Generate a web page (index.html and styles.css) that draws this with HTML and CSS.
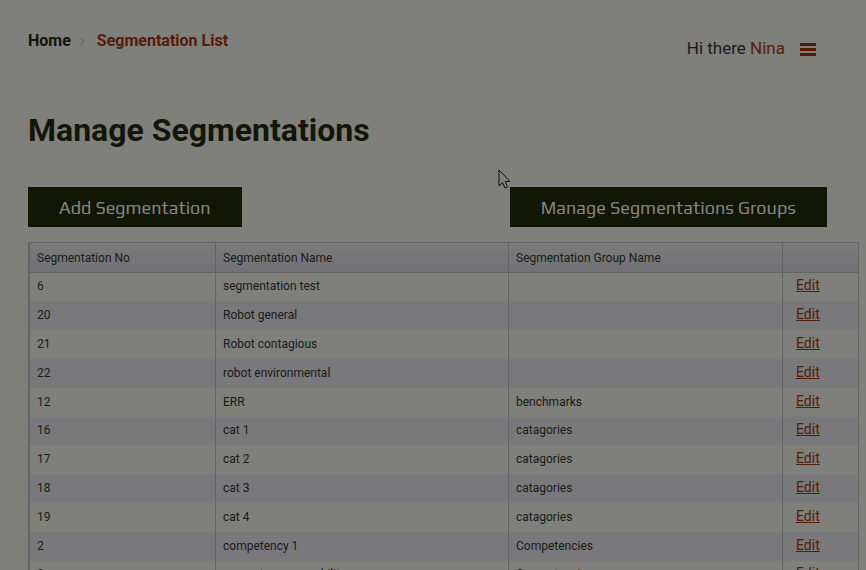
FILE: index.html
```html
<!DOCTYPE html>
<html lang="en">
<head>
    <meta charset="UTF-8">
    <meta name="viewport" content="width=device-width, initial-scale=1.0">
    <title>Segmentation List</title>
    <link rel="stylesheet" href="styles.css">
</head>
<body>
    <!-- Breadcrumb and user menu -->
    <header class="top-bar">
        <nav class="breadcrumb">
            <a href="#">Home</a>
            <svg class="chevron" viewBox="0 0 6 9"><path d="M1 0.5L5 4.5L1 8.5"/></svg>
            <a href="#" class="current">Segmentation List</a>
        </nav>
        <div class="user">
            <span>Hi there <a href="#">Nina</a></span>
            <button class="menu-button" aria-label="Menu">
                <svg viewBox="0 0 16 13"><path d="M0 0h16v3H0zM0 5h16v3H0zM0 10h16v3H0z"/></svg>
            </button>
        </div>
    </header>

    <main>
        <h1>Manage Segmentations</h1>
        <div class="actions">
            <button>Add Segmentation</button>
            <button>Manage Segmentations Groups</button>
        </div>

        <table class="grid">
            <colgroup>
                <col class="col-no">
                <col class="col-name">
                <col class="col-group">
                <col class="col-edit">
            </colgroup>
            <thead>
                <tr><th>Segmentation No</th><th>Segmentation Name</th><th>Segmentation Group Name</th><th></th></tr>
            </thead>
            <tbody>
                <tr><td>6</td><td>segmentation test</td><td></td><td><a href="#">Edit</a></td></tr>
                <tr><td>20</td><td>Robot general</td><td></td><td><a href="#">Edit</a></td></tr>
                <tr><td>21</td><td>Robot contagious</td><td></td><td><a href="#">Edit</a></td></tr>
                <tr><td>22</td><td>robot environmental</td><td></td><td><a href="#">Edit</a></td></tr>
                <tr><td>12</td><td>ERR</td><td>benchmarks</td><td><a href="#">Edit</a></td></tr>
                <tr><td>16</td><td>cat 1</td><td>catagories</td><td><a href="#">Edit</a></td></tr>
                <tr><td>17</td><td>cat 2</td><td>catagories</td><td><a href="#">Edit</a></td></tr>
                <tr><td>18</td><td>cat 3</td><td>catagories</td><td><a href="#">Edit</a></td></tr>
                <tr><td>19</td><td>cat 4</td><td>catagories</td><td><a href="#">Edit</a></td></tr>
                <tr><td>2</td><td>competency 1</td><td>Competencies</td><td><a href="#">Edit</a></td></tr>
                <tr><td>3</td><td>competency&nbsp; capability</td><td>Competencies</td><td><a href="#">Edit</a></td></tr>
            </tbody>
        </table>
    </main>

    <svg class="cursor" viewBox="0 0 13 20"><path d="M1 1V17L4.5 13.5L7 19L9.5 18L7.2 12.5H12Z"/></svg>
</body>
</html>
```

FILE: styles.css
```css
body {
    margin: 0;
    padding: 0 7px 0 28px;
    height: 100vh;
    box-sizing: border-box;
    overflow: hidden;
    background-color: #7f7f7b;
    color: #1a1a1a;
    font-family: Roboto, sans-serif;
}
a {
    color: #541c06;
}
.top-bar {
    display: flex;
    justify-content: space-between;
    padding: 28px 43px 0 0;
}
.breadcrumb {
    display: flex;
    align-items: center;
    height: 24px;
    font-size: 16px;
    font-weight: bold;
}
.breadcrumb a {
    color: #121606;
    text-decoration: none;
}
.breadcrumb a.current {
    color: #541c06;
}
.chevron {
    width: 6px;
    height: 9px;
    margin: 3px 12px 0 8px;
    fill: none;
    stroke: #5c5c5a;
}
.user {
    display: flex;
    align-items: center;
    gap: 15px;
    height: 40px;
    font-size: 17px;
}
.user a {
    text-decoration: none;
}
.menu-button {
    padding: 0;
    border: none;
    background: none;
    cursor: pointer;
}
.menu-button svg {
    display: block;
    width: 16px;
    height: 13px;
    margin-top: 2px;
    fill: #541c06;
}
h1 {
    margin: 42px 0 37px;
    font-size: 32px;
    line-height: 40px;
    color: #121606;
}
.actions {
    display: flex;
    justify-content: space-between;
    margin: 0 32px 15px 0;
}
.actions button {
    height: 40px;
    padding: 0 31px;
    border: none;
    background-color: #121604;
    color: #858582;
    font-family: Play, Roboto, sans-serif;
    font-size: 18px;
    cursor: pointer;
}
.grid {
    width: 100%;
    table-layout: fixed;
    border-collapse: separate;
    border-spacing: 0;
    border: 1px solid #636367;
    border-left-width: 2px;
    font-size: 12px;
}
.col-no {
    width: 186px;
}
.col-name {
    width: 293px;
}
.col-edit {
    width: 75px;
}
.grid th,
.grid td {
    box-sizing: border-box;
    height: 29px;
    padding: 0 7px;
    border-right: 1px solid #636367;
    text-align: left;
    font-weight: normal;
}
.grid td {
    padding-bottom: 2px;
}
.grid tbody tr:nth-child(5n+1) td {
    height: 28px;
}
.grid th {
    height: 30px;
    border-bottom: 1px solid #636367;
    background: linear-gradient(#7b7b7c, #717175);
}
.grid th:last-child,
.grid td:last-child {
    padding-left: 13px;
    border-right: none;
}
.grid td:last-child {
    padding-bottom: 4px;
}
.grid tbody tr:nth-child(even) {
    background-color: #79797b;
}
.grid a {
    font-size: 14px;
}
.cursor {
    position: absolute;
    left: 498px;
    top: 169px;
    width: 13px;
    height: 20px;
    fill: #80807f;
    stroke: #101018;
}
```
